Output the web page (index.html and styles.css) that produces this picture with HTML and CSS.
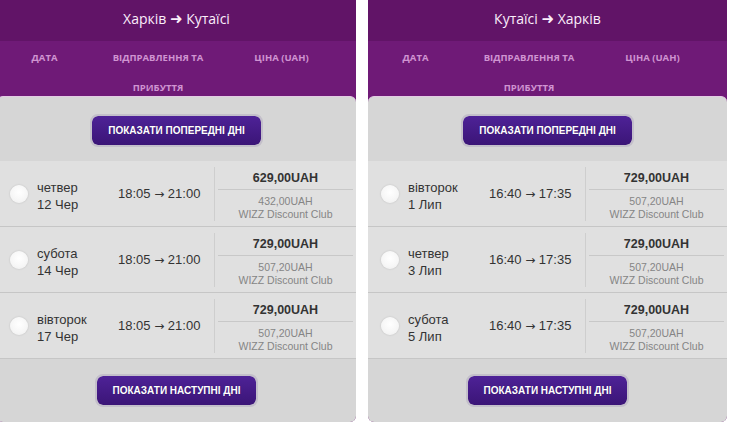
FILE: index.html
```html
<!DOCTYPE html>
<html lang="uk">
<head>
<meta charset="utf-8">
<title>Рейси</title>
<link rel="stylesheet" href="styles.css">
</head>
<body>
<div class="wrap">
  <section class="panel">
    <div class="title">Харків <span class="arr">➜</span> Кутаїсі</div>
    <div class="cols">
      <div class="col">ДАТА</div>
      <div class="col">ВІДПРАВЛЕННЯ ТА<br>ПРИБУТТЯ</div>
      <div class="col">ЦІНА (UAH)</div>
    </div>
    <div class="body">
      <div class="btn-area top"><button class="btn">ПОКАЗАТИ ПОПЕРЕДНІ ДНІ</button></div>
      <div class="row">
        <div class="radio-cell"><span class="radio"></span></div>
        <div class="date">четвер<br>12 Чер</div>
        <div class="time">18:05 <span class="tarr">→</span> 21:00</div>
        <div class="price"><div class="main">629,00UAH</div><div class="sub">432,00UAH<br>WIZZ Discount Club</div></div>
      </div>
      <div class="row">
        <div class="radio-cell"><span class="radio"></span></div>
        <div class="date">субота<br>14 Чер</div>
        <div class="time">18:05 <span class="tarr">→</span> 21:00</div>
        <div class="price"><div class="main">729,00UAH</div><div class="sub">507,20UAH<br>WIZZ Discount Club</div></div>
      </div>
      <div class="row">
        <div class="radio-cell"><span class="radio"></span></div>
        <div class="date">вівторок<br>17 Чер</div>
        <div class="time">18:05 <span class="tarr">→</span> 21:00</div>
        <div class="price"><div class="main">729,00UAH</div><div class="sub">507,20UAH<br>WIZZ Discount Club</div></div>
      </div>
      <div class="btn-area bottom"><button class="btn">ПОКАЗАТИ НАСТУПНІ ДНІ</button></div>
    </div>
  </section>
  <section class="panel">
    <div class="title">Кутаїсі <span class="arr">➜</span> Харків</div>
    <div class="cols">
      <div class="col">ДАТА</div>
      <div class="col">ВІДПРАВЛЕННЯ ТА<br>ПРИБУТТЯ</div>
      <div class="col">ЦІНА (UAH)</div>
    </div>
    <div class="body">
      <div class="btn-area top"><button class="btn">ПОКАЗАТИ ПОПЕРЕДНІ ДНІ</button></div>
      <div class="row">
        <div class="radio-cell"><span class="radio"></span></div>
        <div class="date">вівторок<br>1 Лип</div>
        <div class="time">16:40 <span class="tarr">→</span> 17:35</div>
        <div class="price"><div class="main">729,00UAH</div><div class="sub">507,20UAH<br>WIZZ Discount Club</div></div>
      </div>
      <div class="row">
        <div class="radio-cell"><span class="radio"></span></div>
        <div class="date">четвер<br>3 Лип</div>
        <div class="time">16:40 <span class="tarr">→</span> 17:35</div>
        <div class="price"><div class="main">729,00UAH</div><div class="sub">507,20UAH<br>WIZZ Discount Club</div></div>
      </div>
      <div class="row">
        <div class="radio-cell"><span class="radio"></span></div>
        <div class="date">субота<br>5 Лип</div>
        <div class="time">16:40 <span class="tarr">→</span> 17:35</div>
        <div class="price"><div class="main">729,00UAH</div><div class="sub">507,20UAH<br>WIZZ Discount Club</div></div>
      </div>
      <div class="btn-area bottom"><button class="btn">ПОКАЗАТИ НАСТУПНІ ДНІ</button></div>
    </div>
  </section>
</div>
</body>
</html>
```

FILE: styles.css
```css
html, body {
  margin: 0;
  padding: 0;
  background: #ffffff;
}
body {
  font-family: "Liberation Sans", Arial, sans-serif;
  overflow: hidden;
}
.wrap {
  display: flex;
  gap: 12px;
  margin-left: -3px;
}
.panel {
  width: 359px;
  height: 422px;
  flex: none;
  display: flex;
  flex-direction: column;
  background: #6f1a77;
  border-radius: 0 0 6px 6px;
  overflow: hidden;
}
.title {
  height: 41px;
  box-sizing: border-box;
  background: #611467;
  color: #fbeefb;
  font-family: "Open Sans", sans-serif;
  font-size: 14px;
  line-height: 38px;
  text-align: center;
}
.arr {
  font-family: "DejaVu Sans", sans-serif;
  font-size: 15px;
}
.cols {
  height: 55px;
  flex: none;
  box-sizing: border-box;
  padding-top: 2px;
  display: grid;
  grid-template-columns: 95px 132px 115px 1fr;
  background: #6f1a77;
  color: #cf94d1;
  font-family: "Open Sans", sans-serif;
  font-weight: 700;
  font-size: 9.5px;
  line-height: 30px;
  text-align: center;
  overflow: hidden;
}
.body {
  flex: 1;
  display: flex;
  flex-direction: column;
  background: #d6d6d6;
  border-top: 1px solid #e3cbe4;
  border-radius: 6px 6px 0 0;
}
.btn-area {
  display: flex;
  justify-content: center;
}
.btn-area.top {
  padding: 17px 0 14px;
}
.btn-area.bottom {
  padding: 15px 0 15px;
}
.btn {
  height: 33px;
  box-sizing: border-box;
  border: 2px solid #c3bfca;
  border-radius: 8px;
  background: linear-gradient(#4e2297, #3b1577);
  background-clip: padding-box;
  color: #ffffff;
  font-family: "Liberation Sans", Arial, sans-serif;
  font-weight: bold;
  font-size: 10px;
  padding: 0 16px;
  text-shadow: 0 0 1px rgba(0, 0, 0, 0.3);
  cursor: pointer;
}
.row {
  height: 66px;
  box-sizing: border-box;
  display: grid;
  grid-template-columns: 40px 81px 96px 1fr;
  align-items: center;
  background: #e0e0e0;
  border-bottom: 1px solid #c6c6c6;
  color: #333333;
  font-size: 13px;
}
.radio-cell {
  display: flex;
  padding-left: 13px;
}
.radio {
  width: 18px;
  height: 18px;
  border-radius: 50%;
  background: radial-gradient(circle at 50% 40%, #ffffff 0%, #f6f6f6 60%, #ececec 100%);
  box-shadow: 0 0 2px rgba(0, 0, 0, 0.18);
}
.date {
  line-height: 17px;
  padding-top: 4px;
}
.time {
  line-height: 16px;
  padding-top: 1px;
  white-space: nowrap;
}
.tarr {
  font-family: "DejaVu Sans", sans-serif;
  font-size: 12px;
}
.price {
  align-self: stretch;
  margin: 6px 0 5px;
  border-left: 1px solid #cecece;
  text-align: center;
}
.main {
  margin: 0 3px;
  line-height: 22px;
  font-weight: bold;
  font-size: 12.5px;
  border-bottom: 1px solid #c8c8c8;
}
.sub {
  padding-top: 5px;
  line-height: 13px;
  font-size: 10.5px;
  color: #858585;
}
```
